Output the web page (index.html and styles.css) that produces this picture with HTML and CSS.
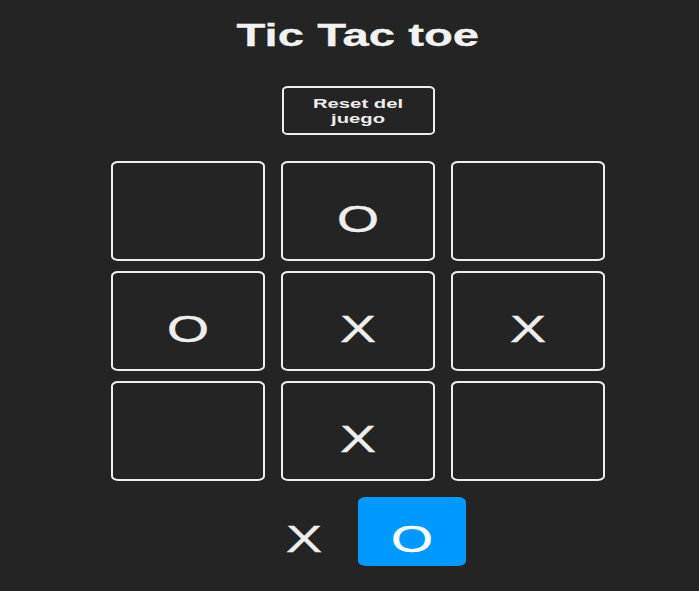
FILE: index.html
```html
<!DOCTYPE html>
<html lang="es">
<head>
<meta charset="utf-8">
<title>Tic Tac toe</title>
<link rel="stylesheet" href="styles.css">
</head>
<body>
<main class="board">
  <h1 class="title"><span class="wide">Tic Tac toe</span></h1>
  <button class="reset"><span class="wide reset-label">Reset del juego</span></button>
  <section class="game">
    <div class="square"><span class="wide mark"></span></div>
    <div class="square"><span class="wide mark">O</span></div>
    <div class="square"><span class="wide mark"></span></div>
    <div class="square"><span class="wide mark">O</span></div>
    <div class="square"><span class="wide mark">X</span></div>
    <div class="square"><span class="wide mark">X</span></div>
    <div class="square"><span class="wide mark"></span></div>
    <div class="square"><span class="wide mark">X</span></div>
    <div class="square"><span class="wide mark"></span></div>
  </section>
  <section class="turn">
    <div class="turn-square"><span class="wide mark">X</span></div>
    <div class="turn-square is-selected"><span class="wide mark">O</span></div>
  </section>
</main>
</body>
</html>
```

FILE: styles.css
```css
html, body {
  margin: 0;
  padding: 0;
  background: #242424;
}

body {
  font-family: "Liberation Sans", Arial, sans-serif;
  color: #eeeeee;
}

.board {
  box-sizing: border-box;
  width: 699px;
  min-height: 591px;
  padding: 17px 0 0 17px;
  display: flex;
  flex-direction: column;
  align-items: center;
}

.wide {
  display: inline-block;
  transform: scaleX(1.5);
}

.title {
  margin: 0;
  font-size: 31.5px;
  line-height: 36px;
  font-weight: bold;
  color: #f2f2f2;
  -webkit-text-stroke: 0.3px #f2f2f2;
}

.reset {
  box-sizing: border-box;
  margin-top: 33px;
  width: 153px;
  height: 49px;
  padding: 0;
  background: transparent;
  border: 2px solid #eeeeee;
  border-radius: 6px / 4px;
  color: #eeeeee;
  font-family: "Liberation Sans", Arial, sans-serif;
  font-weight: bold;
  font-size: 13.5px;
  line-height: 15px;
  display: flex;
  align-items: center;
  justify-content: center;
}

.reset-label {
  width: 64px;
  text-align: center;
}

.game {
  margin-top: 26px;
  display: grid;
  grid-template-columns: repeat(3, 154px);
  grid-auto-rows: 100px;
  column-gap: 16px;
  row-gap: 10px;
}

.square {
  box-sizing: border-box;
  border: 2px solid #eeeeee;
  border-radius: 7px / 5px;
  display: flex;
  align-items: center;
  justify-content: center;
  padding-top: 16px;
}

.mark {
  font-size: 36px;
  line-height: 41px;
  color: #eeeeee;
  -webkit-text-stroke: 0.4px currentColor;
}

.turn {
  margin-top: 16px;
  display: flex;
}

.turn-square {
  box-sizing: border-box;
  width: 108px;
  height: 69px;
  border-radius: 8px / 5px;
  display: flex;
  align-items: center;
  justify-content: center;
  padding-top: 16px;
}

.turn-square.is-selected {
  background: #0099ff;
}

.turn-square.is-selected .mark {
  color: #ffffff;
}
```
